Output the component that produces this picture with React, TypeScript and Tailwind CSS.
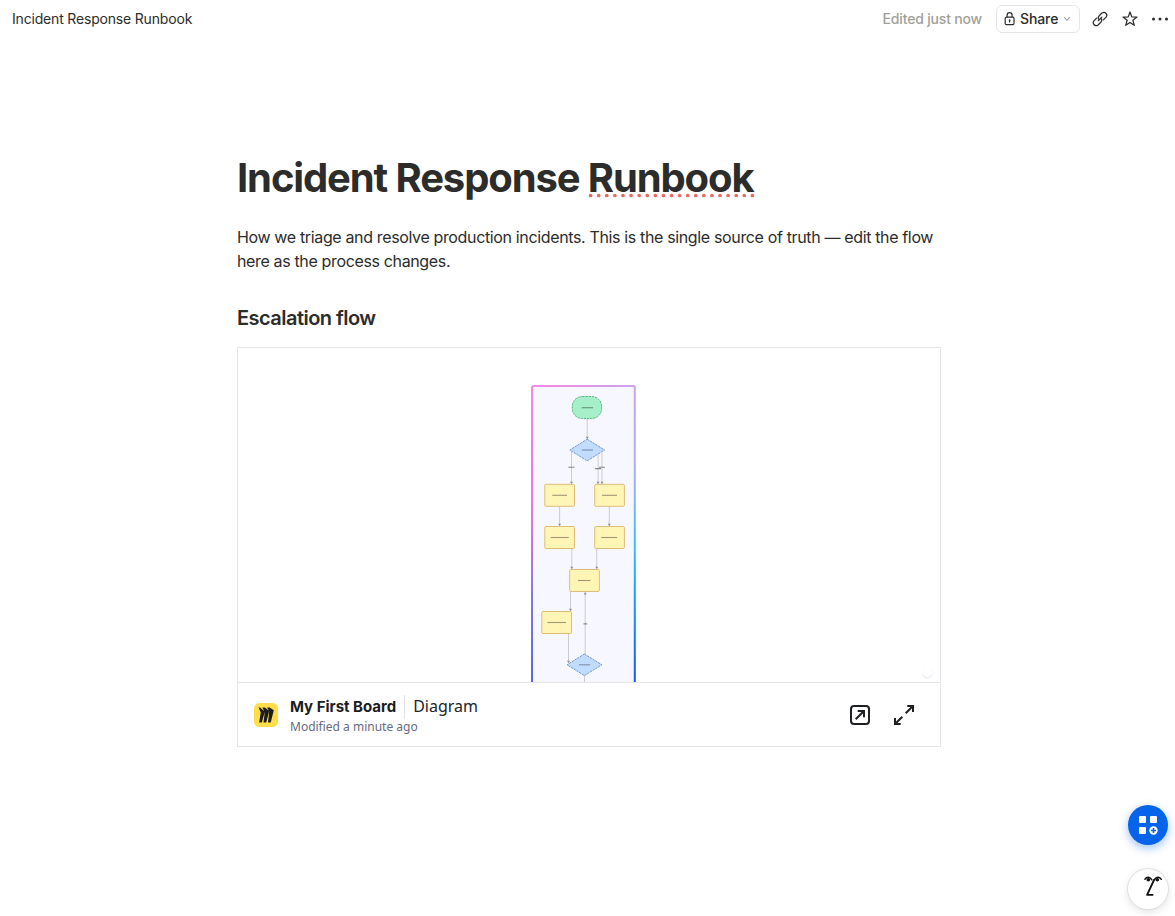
import React from "react";

const ink = "#1f2023";

function LockIcon() {
  return (
    <svg width="12" height="14" viewBox="0 0 12 14" fill="none" stroke="#2c2c2b" strokeWidth="1.2">
      <rect x="1.2" y="5.2" width="8.8" height="7.4" rx="1.2" />
      <path d="M3.1 5.2V3.2a2.5 2.5 0 0 1 5 0v2" />
      <circle cx="5.6" cy="8.2" r="0.9" fill="#2c2c2b" stroke="none" />
      <path d="M5.6 8.2v2.2" />
    </svg>
  );
}

function LinkIcon() {
  return (
    <svg width="16" height="16" viewBox="0 0 16 16" fill="none" stroke="#2c2c2b" strokeWidth="1.25" strokeLinecap="round">
      <path d="M4.6 7.1 1.9 9.8a3 3 0 0 0 4.2 4.2l2.7-2.7a2.9 2.9 0 0 0 .5-3.5" />
      <path d="M11.4 8.9l2.7-2.7A3 3 0 0 0 9.9 2L7.2 4.7a2.9 2.9 0 0 0-.5 3.5" />
      <path d="M6.3 9.7 9.7 6.3" />
    </svg>
  );
}

function StarIcon() {
  return (
    <svg width="16" height="16" viewBox="0 0 16 16" fill="none" stroke="#2c2c2b" strokeWidth="1.25" strokeLinejoin="round">
      <path d="M8 1 9.75 5.9l5.25.15-4.15 3.2 1.45 5.05L8 11.4l-4.3 2.9 1.45-5.05L1 6.05l5.25-.15z" />
    </svg>
  );
}

function Arrow({ x, y, up = false }: { x: number; y: number; up?: boolean }) {
  const s = up ? -1 : 1;
  return <path d={`M${x - 1.5} ${y - 2 * s}h3l-1.5 ${2.2 * s}z`} fill="#8b8b94" />;
}

function Connector({ x, from, to, up = false }: { x: number; from: number; to: number; up?: boolean }) {
  return (
    <g>
      <path d={`M${x} ${from}V${to}`} stroke="#cbcbd1" strokeWidth="1" />
      <Arrow x={x} y={up ? from + 0.5 : to - 0.3} up={up} />
    </g>
  );
}

function Step({ x, y, a, b }: { x: number; y: number; a: number; b: number }) {
  return (
    <g>
      <rect x={x + 0.5} y={y + 0.5} width="29.7" height="22" rx="1.2" fill="#fff6b6" stroke="#dfbd78" strokeWidth="1" />
      <path d={`M${a} ${y + 11.5}H${b}`} stroke="#9f9876" strokeWidth="1.1" />
    </g>
  );
}

function Decision({ cx, cy }: { cx: number; cy: number }) {
  return (
    <g>
      <path
        d={`M${cx} ${cy - 10.8}L${cx + 17.4} ${cy}L${cx} ${cy + 10.8}L${cx - 17.4} ${cy}Z`}
        fill="#c2dcff"
        stroke="#6f98d0"
        strokeWidth="1"
        strokeDasharray="2.4 0.8"
      />
      <path d={`M${cx - 5.5} ${cy}h11.3`} stroke="#8799b6" strokeWidth="1.3" />
    </g>
  );
}

function Diagram() {
  return (
    <svg className="block" width="702" height="334" viewBox="238 348 702 334">
      <defs>
        <linearGradient id="left" x1="0" y1="385" x2="0" y2="682" gradientUnits="userSpaceOnUse">
          <stop offset="0" stopColor="#f587e3" />
          <stop offset="0.4" stopColor="#ed77e1" />
          <stop offset="0.72" stopColor="#8377e2" />
          <stop offset="1" stopColor="#5865ea" />
        </linearGradient>
        <linearGradient id="top" x1="531" y1="0" x2="636" y2="0" gradientUnits="userSpaceOnUse">
          <stop offset="0" stopColor="#f587e3" />
          <stop offset="1" stopColor="#c9a5ec" />
        </linearGradient>
        <linearGradient id="right" x1="0" y1="385" x2="0" y2="682" gradientUnits="userSpaceOnUse">
          <stop offset="0" stopColor="#c9a5ec" />
          <stop offset="0.3" stopColor="#a9aef3" />
          <stop offset="0.52" stopColor="#3fc0fb" />
          <stop offset="0.7" stopColor="#19a0fb" />
          <stop offset="1" stopColor="#1554fb" />
        </linearGradient>
      </defs>
      <rect x="532" y="386" width="103" height="300" fill="#f7f7ff" />
      <path d="M532 682V387.5" stroke="url(#left)" strokeWidth="2" fill="none" />
      <path d="M532 388q0-2 2-2L633 386.01q2 0 2 2" stroke="url(#top)" strokeWidth="2" fill="none" />
      <path d="M634.8 387.5V682" stroke="url(#right)" strokeWidth="2" fill="none" />

      <Connector x={587.2} from={419} to={439} />
      <Connector x={571.5} from={452} to={484} />
      <Connector x={598.1} from={455} to={484} />
      <Connector x={602} from={453} to={484} />
      <Connector x={559.6} from={506} to={526} />
      <Connector x={609.3} from={506} to={526} />
      <Connector x={571.8} from={548} to={569} />
      <Connector x={596.7} from={548} to={569} />
      <Connector x={570.5} from={591} to={611} />
      <Connector x={585.2} from={592} to={654} up />
      <Connector x={568.5} from={633} to={663} />
      <path d="M584.5 675V682" stroke="#cbcbd1" />
      <path d="M568.4 467.2h6M595 468.6h6M599 467.2h6M583.5 623.9h3.7" stroke="#85858c" strokeWidth="1.1" />

      <rect x="572.3" y="396.5" width="29.3" height="22" rx="10" fill="#a5f0c8" stroke="#54b582" strokeWidth="1" strokeDasharray="2.4 0.8" />
      <path d="M581.7 407.7h11.3" stroke="#6b9c81" strokeWidth="1.2" />
      <Decision cx={587.2} cy={450} />
      <Step x={544.3} y={483.8} a={552.3} b={567} />
      <Step x={594.2} y={483.8} a={602} b={617} />
      <Step x={544.3} y={526} a={550.6} b={568.7} />
      <Step x={594.2} y={526} a={601.2} b={617} />
      <Step x={569.2} y={569} a={578} b={590.5} />
      <Step x={541.3} y={611} a={547.4} b={566} />
      <Decision cx={584.4} cy={664.8} />
    </svg>
  );
}

function BoardLogo() {
  return (
    <svg width="24" height="24" viewBox="0 0 24 24">
      <rect width="24" height="24" rx="5.5" fill="#ffdd4b" />
      <path
        fill="#1c1c1e"
        d="M15.6 4.4h-2.5l1.7 3-4.1-3H8.3l1.9 3.8-4.1-3.8H4.6l2.1 4.9-1.5 10.2h2.6l3-10.8-1.3 10.8h2.7l3-11.6-1.2 11.6h2.7l3.1-12.2z"
      />
    </svg>
  );
}

function OpenIcon() {
  return (
    <svg width="24" height="24" viewBox="0 0 24 24" fill="none" stroke={ink} strokeWidth="2">
      <rect x="3" y="3" width="18" height="18" rx="3" />
      <path d="M7.7 16.3l8-8M9.7 8h6.3v6.3" />
    </svg>
  );
}

function ExpandIcon() {
  return (
    <svg width="24" height="24" viewBox="0 0 24 24" fill="none" stroke={ink} strokeWidth="2">
      <path d="M13.7 10.3l7-7M15.3 3H21v6M10.3 13.7l-7 7M3 15v6h5.7" />
    </svg>
  );
}

function AppsIcon() {
  return (
    <svg width="20" height="20" viewBox="0 0 20 20" fill="#fff">
      <rect x="1" y="1" width="7" height="7" rx="1" />
      <rect x="12" y="1" width="7" height="7" rx="1" />
      <rect x="1" y="12" width="7" height="7" rx="1" />
      <circle cx="15.5" cy="15.5" r="4.2" />
      <path d="M15.5 13v5M13 15.5h5" stroke="#0564ea" strokeWidth="1.5" />
    </svg>
  );
}

function FaceIcon() {
  return (
    <svg width="20" height="22" viewBox="0 0 20 22" fill="none" stroke="#111" strokeLinecap="round">
      <path d="M1.9 3.2Q5.2-.8 8.8 3.8M11.2 3.8Q14.8-.8 18.3 3.2" strokeWidth="1.5" />
      <path d="M11.3 3.4L4.1 18.9H10.3" strokeWidth="1.9" strokeLinejoin="round" strokeLinecap="butt" />
      <circle cx="5.3" cy="3.8" r="1.8" fill="#111" stroke="none" />
      <circle cx="14.3" cy="3.8" r="1.8" fill="#111" stroke="none" />
    </svg>
  );
}

export default function App() {
  return (
    <div className="relative h-[916px] w-[1175px] overflow-hidden bg-white font-['Inter',sans-serif] text-[#2c2c2b]">
      <header className="flex h-[38px] items-center justify-between pl-3 pr-[7px] text-sm leading-5">
        <span className="tracking-[-0.18px]">Incident Response Runbook</span>
        <div className="flex items-center">
          <span className="mr-[14px] font-[450] tracking-[-0.18px] text-[#a19f99]">Edited just now</span>
          <button className="mr-3 flex h-7 w-[84px] items-center rounded-md border border-[#e5e5e4] pl-[7px] font-[450]">
            <LockIcon />
            <span className="ml-1 w-[38px] tracking-[-0.1px]">Share</span>
            <svg className="ml-[5px]" width="8" height="6" viewBox="0 0 8 6" fill="none" stroke="#a4a39f" strokeWidth="1.1">
              <path d="M1 1.2l3 3 3-3" />
            </svg>
          </button>
          <div className="flex items-center gap-[14px]">
            <LinkIcon />
            <StarIcon />
            <svg width="16" height="16" viewBox="0 0 16 16" fill="#2c2c2b">
              <circle cx="1.5" cy="8" r="1.5" />
              <circle cx="8" cy="8" r="1.5" />
              <circle cx="14.5" cy="8" r="1.5" />
            </svg>
          </div>
        </div>
      </header>

      <main className="ml-[237px] w-[704px] pt-[116px]">
        <h1 className="whitespace-nowrap text-[40px] font-bold leading-[48px] tracking-[-1.12px]">
          Incident Response{" "}
          <span className="relative inline-block">
            Runbook
            <svg className="absolute left-0 top-[39px]" width="168" height="5" viewBox="0 0 168 5">
              <path d="M2.6 2.5H166" stroke="#ee665f" strokeWidth="3.7" strokeLinecap="round" strokeDasharray="0 8.09" />
            </svg>
          </span>
        </h1>
        <p className="mt-[23px] whitespace-nowrap text-base leading-6 tracking-[-0.355px]">
          How we triage and resolve production incidents. This is the single source of truth — edit the flow
          <br />
          here as the process changes.
        </p>
        <h2 className="mt-[32px] text-xl font-semibold leading-[26px] tracking-[-0.53px]">Escalation flow</h2>
        <section className="mt-4 h-[400px] border border-[#e6e6ea]">
          <div className="relative h-[334px]">
            <Diagram />
            <span className="absolute bottom-[5px] right-2 size-[9px] rounded-full bg-white shadow-[0_1px_2px_#e4e4ec]" />
          </div>
          <footer className="flex h-16 items-center border-t border-[#e6e6ea] pl-4 pr-6">
            <BoardLogo />
            <div className="ml-3 flex flex-col">
              <div className="flex h-6 items-center">
                <span className="text-[15px] font-bold leading-6 tracking-[-0.01px] text-[#1c1c1e]">My First Board</span>
                <span className="ml-2 h-6 w-px bg-[#e1e2eb]" />
                <span className="mb-[2px] ml-2 font-['Noto_Sans',sans-serif] text-base leading-6 text-[#222428]">Diagram</span>
              </div>
              <span className="font-['Noto_Sans',sans-serif] text-xs leading-4 text-[#656b81]">Modified a minute ago</span>
            </div>
            <div className="ml-auto flex gap-5">
              <OpenIcon />
              <ExpandIcon />
            </div>
          </footer>
        </section>
      </main>

      <button className="absolute left-[1128px] top-[805px] flex size-10 items-center justify-center rounded-full bg-[#0564ea] shadow-[0_3px_10px_rgba(5,100,234,0.4)]">
        <AppsIcon />
      </button>
      <button className="absolute left-[1128px] top-[869px] flex size-10 items-center justify-center rounded-full bg-white pb-[4px] pl-[10px] shadow-[0_0_0_1px_#dfdfde,0_3px_9px_rgba(0,0,0,0.12)]">
        <FaceIcon />
      </button>
    </div>
  );
}
